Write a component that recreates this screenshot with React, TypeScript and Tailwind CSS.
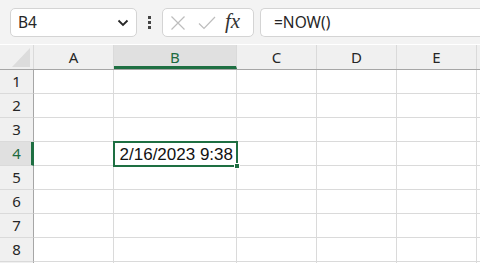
import React from 'react';

const cols = [
  { id: 'A', w: 'w-[80px]' },
  { id: 'B', w: 'w-[123px]' },
  { id: 'C', w: 'w-[80px]' },
  { id: 'D', w: 'w-[80px]' },
  { id: 'E', w: 'w-[80px]' },
  { id: '', w: 'w-[80px]' },
];

const rows = [1, 2, 3, 4, 5, 6, 7, 8, 0];

const App: React.FC = () => {
  return (
    <div className="w-[480px] h-[263px] overflow-hidden bg-white font-['Noto_Sans',sans-serif] text-[#262626]">
      {/* toolbar */}
      <div className="h-[44px] bg-[#f3f3f3] flex items-center pl-[10px] pt-px">
        <div className="w-[127px] h-[29px] bg-white border border-[#d4d4d4] rounded-[5px] flex items-center justify-between pl-[7px] pr-[7px]">
          <span className="text-[15.5px] leading-none">B4</span>
          <svg width="12" height="8" viewBox="0 0 12 8" className="mt-px">
            <path d="M1.5 1.5 L6 6 L10.5 1.5" fill="none" stroke="#262626" strokeWidth="1.8" />
          </svg>
        </div>
        <div className="w-[25px] flex flex-col items-center gap-[2px]">
          <div className="w-[3px] h-[3px] bg-[#444]" />
          <div className="w-[3px] h-[3px] bg-[#444]" />
          <div className="w-[3px] h-[3px] bg-[#444]" />
        </div>
        <div className="w-[92px] h-[29px] bg-white border border-[#d4d4d4] rounded-[5px] flex items-center pl-[7px]">
          <svg width="16" height="16" viewBox="0 0 16 16">
            <path d="M1.5 1.5 L14.5 14.5 M14.5 1.5 L1.5 14.5" stroke="#bdbdbd" strokeWidth="1.2" fill="none" />
          </svg>
          <svg width="18" height="16" viewBox="0 0 18 16" className="ml-[12px]">
            <path d="M1 8.5 L6 13.5 L17 2" stroke="#bdbdbd" strokeWidth="1.2" fill="none" />
          </svg>
          <span className="ml-[9px] text-[21px] leading-none italic font-['Liberation_Serif',serif] text-[#333] -mt-[2px]">fx</span>
        </div>
        <div className="ml-[6px] flex-1 h-[29px] bg-white border border-[#d4d4d4] border-r-0 rounded-l-[5px] flex items-center pl-[13px]">
          <span className="text-[15.5px] leading-none">=NOW()</span>
        </div>
      </div>

      {/* column headers */}
      <div className="flex h-[25px] bg-[#f0f0f0] border-b border-[#a6a6a6] mt-px">
        <div className="w-[34px] shrink-0 border-r border-[#dadada] flex items-end justify-end pr-[3px] pb-[2px]">
          <svg width="18" height="19" viewBox="0 0 18 19">
            <path d="M18 0 L18 19 L0 19 Z" fill="#dcdcdc" />
          </svg>
        </div>
        {cols.map((c, i) => (
          <div
            key={i}
            className={`${c.w} shrink-0 flex items-center justify-center text-[15px] border-r ${
              c.id === 'B'
                ? 'bg-[#e0e0e0] border-[#dadada] text-[#1e6b41] border-b-[3px] border-b-[#1e6f42] pt-[3px]'
                : 'border-[#dadada]'
            }`}
          >
            {c.id}
          </div>
        ))}
      </div>

      {/* rows */}
      {rows.map((r, ri) => (
        <div key={ri} className="flex h-[24px]">
          <div
            className={`w-[34px] shrink-0 flex items-center justify-center text-[15px] border-b border-b-[#dadada] ${
              r === 4
                ? 'bg-[#e0e0e0] text-[#1e6b41] border-r-[3px] border-r-[#1e6f42] pl-[2px]'
                : 'bg-[#f0f0f0] border-r border-r-[#a6a6a6]'
            }`}
          >
            {r > 0 ? r : ''}
          </div>
          {cols.map((c, i) => (
            <div key={i} className={`${c.w} shrink-0 border-r border-b border-[#dadada] relative`}>
              {r === 4 && c.id === 'B' && (
                <div className="absolute -left-px -top-px w-[125px] h-[26px] border-2 border-[#1e6f42] flex items-center justify-end pr-[3px] z-10">
                  <span className="text-[17px] leading-none font-['Liberation_Sans',sans-serif] text-[#111]">2/16/2023 9:38</span>
                  <div className="absolute -right-[4px] -bottom-[4px] w-[6px] h-[6px] bg-[#1e6f42] border border-white" />
                </div>
              )}
            </div>
          ))}
        </div>
      ))}
    </div>
  );
};

export default App;
